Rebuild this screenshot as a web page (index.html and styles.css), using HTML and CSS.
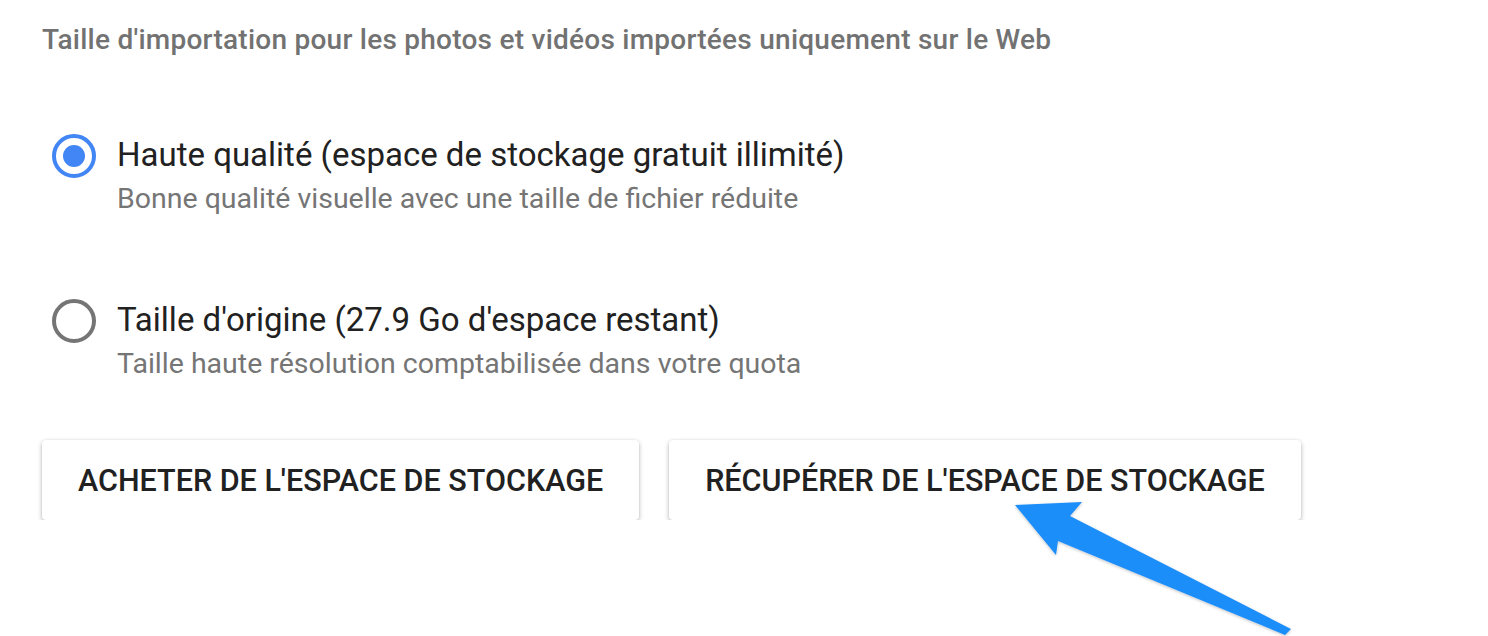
FILE: index.html
```html
<!DOCTYPE html>
<html lang="fr">
<head>
    <meta charset="UTF-8">
    <meta name="viewport" content="width=device-width, initial-scale=1.0">
    <title>Taille d'importation</title>
    <link rel="stylesheet" href="styles.css">
</head>
<body>
    <div class="page">
        <div class="titre">Taille d'importation pour les photos et vidéos importées uniquement sur le Web</div>

        <div class="options">
            <label class="option">
                <span class="radio radio-actif"><span class="point"></span></span>
                <span class="option-texte">
                    <span class="option-titre">Haute qualité (espace de stockage gratuit illimité)</span>
                    <span class="option-detail">Bonne qualité visuelle avec une taille de fichier réduite</span>
                </span>
            </label>
            <label class="option">
                <span class="radio"></span>
                <span class="option-texte">
                    <span class="option-titre">Taille d'origine (27.9 Go d'espace restant)</span>
                    <span class="option-detail">Taille haute résolution comptabilisée dans votre quota</span>
                </span>
            </label>
        </div>

        <div class="boutons">
            <button class="bouton">Acheter de l'espace de stockage</button>
            <button class="bouton">Récupérer de l'espace de stockage</button>
        </div>
    </div>

    <!-- fleche d'annotation -->
    <svg class="fleche" width="1488" height="636" viewBox="0 0 1488 636">
        <defs>
            <filter id="ombre" x="-10%" y="-10%" width="120%" height="120%">
                <feDropShadow dx="0" dy="1" stdDeviation="1.5" flood-color="#000" flood-opacity="0.25"/>
            </filter>
        </defs>
        <polygon filter="url(#ombre)" fill="#1E8EFA"
            points="1015,505 1082,502 1070,516 1291,629 1285,635 1058,541 1056,555"/>
    </svg>
</body>
</html>
```

FILE: styles.css
```css
body {
    font-family: Roboto, "Noto Sans", Arial, sans-serif;
    margin: 0;
    padding: 0;
    background-color: #ffffff;
    overflow: hidden;
}
.page {
    padding: 22px 0 0 42px;
}
.titre {
    font-size: 28px;
    font-weight: 500;
    letter-spacing: 0.25px;
    color: #727272;
    line-height: 36px;
}
.options {
    display: flex;
    flex-direction: column;
    gap: 84px;
    margin-top: 77px;
}
.option {
    display: flex;
    align-items: flex-start;
    gap: 21px;
    padding-left: 10px;
}
.radio {
    width: 36px;
    height: 36px;
    border: 4px solid #757575;
    border-radius: 50%;
    display: flex;
    align-items: center;
    justify-content: center;
    flex-shrink: 0;
    margin-top: -1px;
}
.radio-actif {
    border-color: #4285f4;
}
.point {
    width: 22px;
    height: 22px;
    border-radius: 50%;
    background-color: #4285f4;
}
.option-texte {
    display: flex;
    flex-direction: column;
}
.option-titre {
    font-size: 33px;
    color: #212121;
    line-height: 40px;
}
.option-detail {
    font-size: 28.5px;
    color: #757575;
    line-height: 34px;
    margin-top: 7px;
}
.boutons {
    display: flex;
    gap: 30px;
    margin-top: 59px;
}
.bouton {
    font-family: Roboto, "Noto Sans", Arial, sans-serif;
    font-size: 30.5px;
    font-weight: 500;
    text-transform: uppercase;
    color: #212121;
    background: #ffffff;
    border: none;
    border-radius: 4px;
    height: 80px;
    padding: 0 36px;
    box-shadow: 0 2px 5px rgba(0, 0, 0, 0.28), 0 0 2px rgba(0, 0, 0, 0.08);
}
.fleche {
    position: absolute;
    left: 0;
    top: 0;
    pointer-events: none;
}
```
